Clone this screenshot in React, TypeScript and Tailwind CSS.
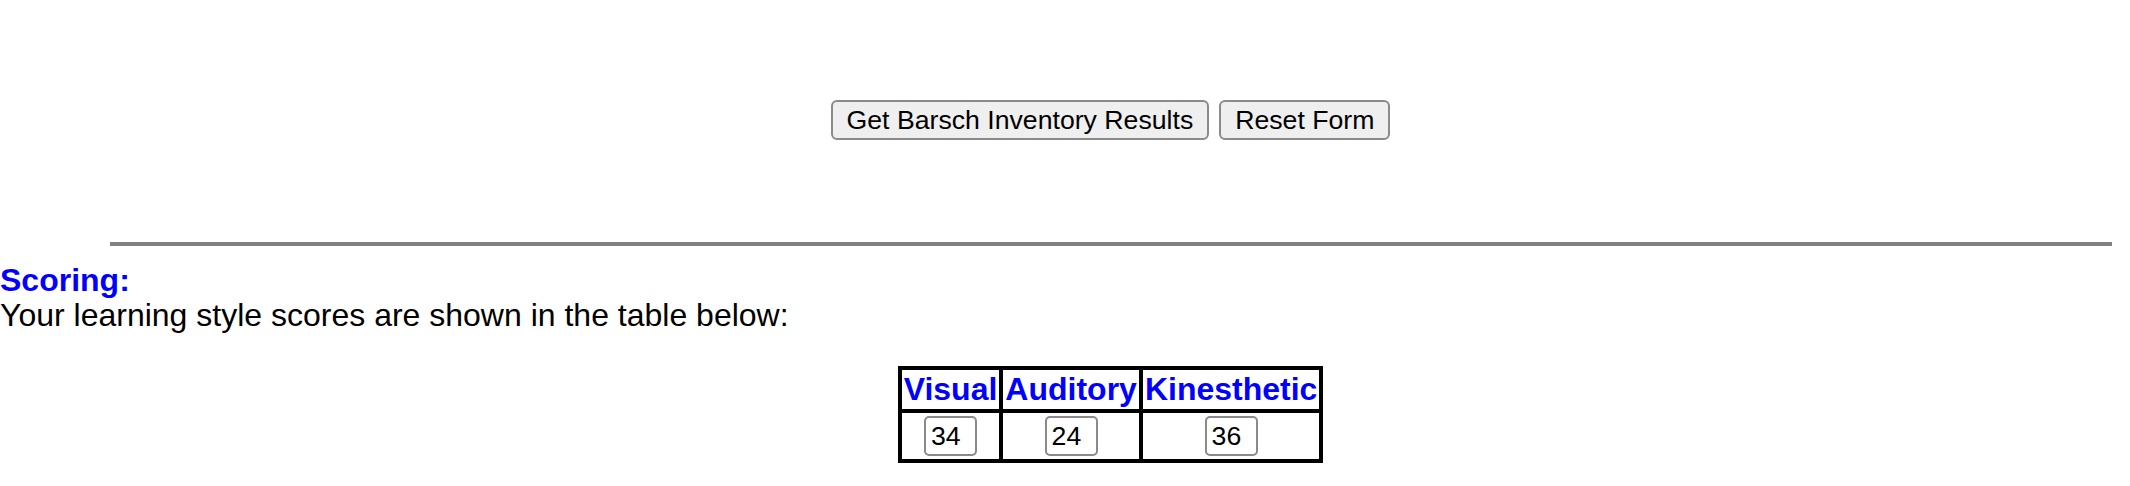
import { useState } from 'react'

const SCORES = [
  { label: 'Visual', value: '34' },
  { label: 'Auditory', value: '24' },
  { label: 'Kinesthetic', value: '36' },
]

export default function App() {
  const [scores, setScores] = useState(SCORES.map(s => s.value))

  return (
    <div className="w-[2130px] h-[486px] bg-white text-black font-['Liberation_Sans',Arial,sans-serif] text-[32px] leading-[35px]">
      <div className="pl-[91px]">
        <div className="flex justify-center gap-[10px] pt-[100px]">
          <button className="h-[40px] px-[14px] rounded-[6px] border-2 border-[#8a8a8a] bg-[#efefef] text-[26.67px] leading-[30px]">
            Get Barsch Inventory Results
          </button>
          <button
            onClick={() => setScores(['', '', ''])}
            className="h-[40px] px-[14px] rounded-[6px] border-2 border-[#8a8a8a] bg-[#efefef] text-[26.67px] leading-[30px]"
          >
            Reset Form
          </button>
        </div>
        <div className="mx-auto mt-[102px] w-[2002px] h-[4px] bg-[#808080]" />
      </div>

      <div className="mt-[17px] font-bold text-[#0000ff]">Scoring:</div>
      <div>Your learning style scores are shown in the table below:</div>

      <div className="pl-[91px] mt-[33px] flex justify-center">
        <table className="border-collapse border-4 border-black">
          <thead>
            <tr>
              {SCORES.map(s => (
                <th key={s.label} className="border-4 border-black px-[2px] py-[2px] font-bold text-[#0000ff] leading-[35px]">
                  {s.label}
                </th>
              ))}
            </tr>
          </thead>
          <tbody>
            <tr>
              {SCORES.map((s, i) => (
                <td key={s.label} className="border-4 border-black px-[2px] py-[3px] text-center">
                  <input
                    value={scores[i]}
                    onChange={e => setScores(v => v.map((x, j) => (j === i ? e.target.value : x)))}
                    className="w-[53px] h-[40px] px-[5px] align-middle rounded-[5px] border-2 border-[#8a8a8a] bg-white text-[26.67px] leading-[30px]"
                  />
                </td>
              ))}
            </tr>
          </tbody>
        </table>
      </div>
    </div>
  )
}
